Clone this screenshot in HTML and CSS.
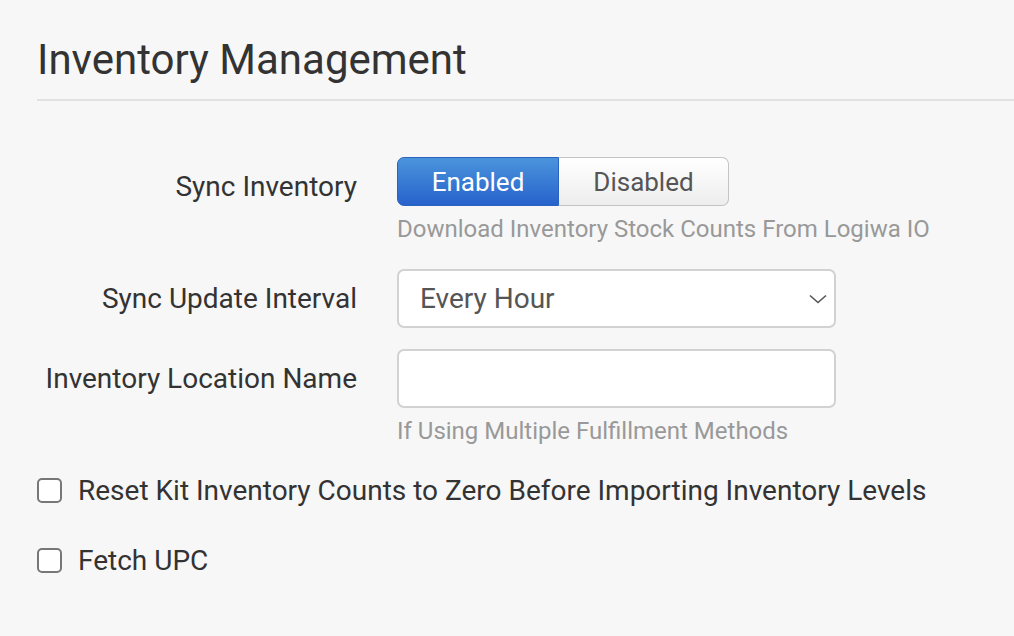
FILE: index.html
```html
<!DOCTYPE html>
<html lang="en">
<head>
    <meta charset="UTF-8">
    <meta name="viewport" content="width=device-width, initial-scale=1.0">
    <title>Inventory Management</title>
    <link rel="stylesheet" href="styles.css">
</head>
<body>
    <div class="settings-section">
        <h1 class="section-title">Inventory Management</h1>

        <div class="form-row first-row">
            <label class="row-label">Sync Inventory</label>
            <div class="row-control">
                <div class="toggle-group">
                    <button type="button" class="toggle-btn active">Enabled</button>
                    <button type="button" class="toggle-btn">Disabled</button>
                </div>
                <p class="help-text">Download Inventory Stock Counts From Logiwa IO</p>
            </div>
        </div>

        <div class="form-row">
            <label class="row-label" for="interval">Sync Update Interval</label>
            <div class="row-control">
                <div class="select-wrap">
                    <select id="interval">
                        <option>Every Hour</option>
                        <option>Every 6 Hours</option>
                        <option>Every Day</option>
                    </select>
                    <svg class="chevron" width="18" height="10" viewBox="0 0 18 10"><path d="M1 1.5 L9 8.5 L17 1.5" fill="none" stroke="#555" stroke-width="1.6"/></svg>
                </div>
            </div>
        </div>

        <div class="form-row tight-row">
            <label class="row-label" for="locationName">Inventory Location Name</label>
            <div class="row-control">
                <input type="text" id="locationName">
                <p class="help-text">If Using Multiple Fulfillment Methods</p>
            </div>
        </div>

        <label class="check-row first-check">
            <input type="checkbox">
            <span>Reset Kit Inventory Counts to Zero Before Importing Inventory Levels</span>
        </label>

        <label class="check-row">
            <input type="checkbox">
            <span>Fetch UPC</span>
        </label>
    </div>
</body>
</html>
```

FILE: styles.css
```css
body {
    margin: 0;
    padding: 0;
    font-family: Roboto, "Liberation Sans", Arial, sans-serif;
    background: #f7f7f7;
    color: #333;
}
.settings-section {
    padding-left: 37px;
}
.section-title {
    margin: 35px 0 0 0;
    padding-bottom: 14px;
    font-size: 42px;
    line-height: 50px;
    font-weight: 400;
    color: #333;
    border-bottom: 2px solid #e2e2e2;
}
.form-row {
    display: grid;
    grid-template-columns: 320px 439px;
    column-gap: 40px;
    margin-top: 27px;
}
.first-row {
    margin-top: 56px;
}
.tight-row {
    margin-top: 21px;
}
.row-label {
    text-align: right;
    font-size: 28px;
    line-height: 59px;
    height: 59px;
    color: #333;
    white-space: nowrap;
}
.toggle-group {
    display: flex;
    width: 332px;
    height: 49px;
}
.toggle-btn {
    font-family: Roboto, "Liberation Sans", Arial, sans-serif;
    font-size: 26px;
    padding: 0;
    border: 1px solid #c4c4c4;
    background: linear-gradient(to bottom, #ffffff, #ededed);
    color: #555;
    cursor: pointer;
    width: 170px;
    border-radius: 0 7px 7px 0;
    border-left: none;
}
.toggle-btn.active {
    width: 162px;
    color: #fff;
    border: 1px solid #2a62c2;
    background: linear-gradient(to bottom, #4a94dc, #2862cc);
    border-radius: 7px 0 0 7px;
}
.help-text {
    margin: 10px 0 0 0;
    font-size: 24px;
    line-height: 26px;
    color: #999;
    white-space: nowrap;
}
.select-wrap {
    position: relative;
}
.select-wrap select,
.row-control input[type="text"] {
    display: block;
    box-sizing: border-box;
    width: 439px;
    height: 59px;
    border: 2px solid #d2d2d2;
    border-radius: 7px;
    background: #fff;
    font-family: Roboto, "Liberation Sans", Arial, sans-serif;
    font-size: 28px;
    color: #555;
    padding: 0 21px;
    outline: none;
}
.select-wrap select {
    -webkit-appearance: none;
    appearance: none;
}
.chevron {
    position: absolute;
    right: 9px;
    top: 25px;
    pointer-events: none;
}
.check-row {
    display: flex;
    align-items: center;
    gap: 16px;
    height: 30px;
    margin-top: 40px;
    font-size: 28px;
    color: #333;
    white-space: nowrap;
}
.first-check {
    margin-top: 31px;
}
.check-row input {
    -webkit-appearance: none;
    appearance: none;
    box-sizing: border-box;
    width: 25px;
    height: 25px;
    margin: 0;
    border: 2px solid #777;
    border-radius: 5px;
    background: #fff;
}
```
